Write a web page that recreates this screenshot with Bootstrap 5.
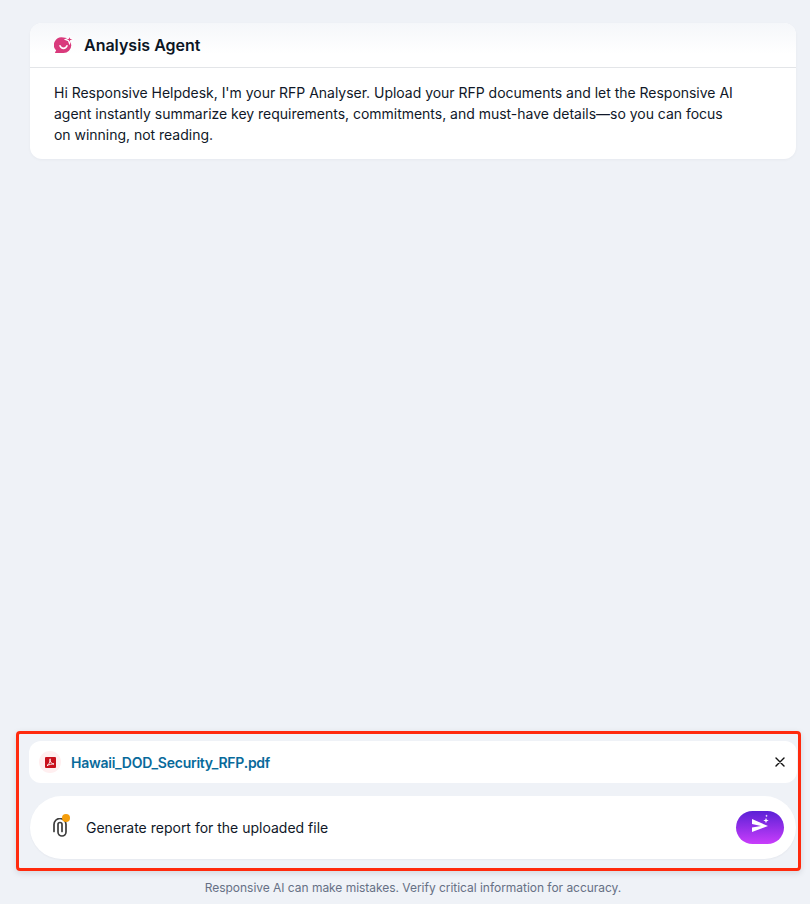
<!DOCTYPE html>
<html lang="en">
<head>
    <meta charset="UTF-8">
    <meta name="viewport" content="width=device-width, initial-scale=1.0">
    <title>Analysis Agent</title>
    <link href="https://cdn.jsdelivr.net/npm/bootstrap@5.3.3/dist/css/bootstrap.min.css" rel="stylesheet">
    <style>
        html, body { height: 100%; overflow: hidden; }
        body {
            background: #eff2f7;
            font-family: Inter, "Noto Sans", sans-serif;
            color: #101828;
            font-size: 14px;
        }
        .chat-page { height: 904px; padding: 23px 12px 0 16px; }
        .agent-box {
            margin: 0 2px 0 14px;
            background: #fff;
            border-radius: 12px;
            box-shadow: 0 1px 3px rgba(16, 24, 40, .04);
        }
        .agent-head {
            height: 45px;
            padding: 0 24px;
            gap: 10px;
            border-bottom: 1px solid #e3e5e8;
            border-radius: 12px 12px 0 0;
            background: linear-gradient(180deg, #f5f7fa 0%, #fff 70%);
        }
        .agent-title { font-size: 16px; font-weight: 600; color: #0b1524; }
        .agent-text {
            margin: 0;
            padding: 14px 60px 14px 24px;
            font-size: 14px;
            line-height: 21px;
            letter-spacing: -.02px;
            color: #101828;
        }
        .upload-frame {
            margin-top: auto;
            height: 140px;
            margin-right: -3px;
            border: 3px solid #ff2a0d;
            border-radius: 4px;
            padding: 7px 1px 0 10px;
            box-shadow: 0 2px 6px rgba(16, 24, 40, .12);
        }
        .file-row {
            height: 42px;
            background: #fff;
            border-radius: 12px;
            padding: 0 12px 0 10px;
            gap: 10px;
        }
        .pdf-badge {
            width: 22px; height: 22px;
            border-radius: 50%;
            background: #ffeff0;
        }
        .file-name { font-size: 14px; font-weight: 600; letter-spacing: -.25px; color: #086a9b; }
        .close-btn { border: 0; background: none; padding: 0; line-height: 0; }
        .prompt-row {
            height: 63px;
            margin: 13px 1px 0 1px;
            background: #fff;
            border-radius: 32px;
            padding: 0 12px 0 20px;
            box-shadow: 0 1px 2px rgba(16, 24, 40, .04);
        }
        .clip-wrap { position: relative; width: 20px; height: 24px; margin-right: 16px; padding: 2px 0 0 3px; }
        .clip-dot {
            position: absolute; top: -2px; right: 0;
            width: 8px; height: 8px;
            border-radius: 50%;
            background: #f59e0b;
        }
        .prompt-text { font-size: 14px; color: #101828; }
        .send-btn {
            width: 48px; height: 33px;
            border: 0;
            padding: 0;
            border-radius: 17px;
            background: linear-gradient(180deg, #5b21d6 0%, #c93dfb 100%);
        }
        .send-icon { margin-bottom: 5px; }
        .disclaimer {
            font-size: 12px;
            color: #667085;
            letter-spacing: -.03px;
            text-align: center;
            padding: 9px 0 9px 12px;
            line-height: 15px;
        }
    </style>
</head>
<body>
    <div class="chat-page d-flex flex-column">
        <div class="agent-box">
            <div class="agent-head d-flex align-items-center">
                <svg width="20" height="18" viewBox="0 0 20 18">
                    <path fill="#d93a7c" d="M9.500 1.500a7.800 7.800 0 0 1 0 15.600H1.800c-.7 0-1-.7-.6-1.200l1-1.300A7.800 7.800 0 0 1 9.500 1.500z"/>
                    <path fill="none" stroke="#fff" stroke-width="1.600" stroke-linecap="round" d="M6 9.800c1.200 3.400 5.800 3.400 7 0"/>
                    <path fill="#d93a7c" stroke="#fff" stroke-width="1.200" d="M15.500-.5l1.100 2.900 2.900 1.100-2.900 1.100-1.100 2.900-1.100-2.900-2.900-1.100 2.900-1.100z"/>
                </svg>
                <span class="agent-title">Analysis Agent</span>
            </div>
            <p class="agent-text">Hi Responsive Helpdesk, I'm your RFP Analyser. Upload your RFP documents and let the Responsive AI agent instantly summarize key requirements, commitments, and must-have details—so you can focus on winning, not reading.</p>
        </div>

        <div class="upload-frame">
            <div class="file-row d-flex align-items-center">
                <span class="pdf-badge d-flex align-items-center justify-content-center">
                    <svg width="11" height="11" viewBox="0 0 11 11">
                        <rect width="11" height="11" rx="1" fill="#c8101c"/>
                        <path fill="none" stroke="#fff" stroke-width=".9" d="M2 8.600c1.400-.8 2.600-2.600 3.200-5.400.2-1 .1-1.400-.1-1.400-.3 0-.4.8 0 2 .6 1.800 1.700 3 3.900 3.200-1.900-.1-4.800.4-7 1.600z"/>
                    </svg>
                </span>
                <span class="file-name flex-grow-1">Hawaii_DOD_Security_RFP.pdf</span>
                <button class="close-btn" type="button" aria-label="Remove">
                    <svg width="10" height="10" viewBox="0 0 10 10"><path stroke="#111" stroke-width="1.400" stroke-linecap="round" d="M1 1l8 8M9 1l-8 8"/></svg>
                </button>
            </div>
            <div class="prompt-row d-flex align-items-center">
                <span class="clip-wrap">
                    <svg width="14" height="19" viewBox="0 0 14 19" class="d-block">
                        <path fill="none" stroke="#3d3d3d" stroke-width="1.700" stroke-linecap="round" d="M1 13.500V6.500a6 6 0 0 1 12 0V14a3.700 3.700 0 0 1-8 0V6.500a2 2 0 0 1 4 0V13.500"/>
                    </svg>
                    <span class="clip-dot"></span>
                </span>
                <span class="prompt-text flex-grow-1">Generate report for the uploaded file</span>
                <button class="send-btn d-flex align-items-center justify-content-center" type="button" aria-label="Send">
                    <svg class="send-icon" width="20" height="22" viewBox="0 0 20 22">
                        <path fill="#fff" d="M2 5l16 7-16 6v-4.600l9-1.400-9-2z"/>
                        <path fill="#fff" d="M16 3.800l.7 2 2 .7-2 .7-.7 2-.7-2-2-.7 2-.7zM16.500.5l.4 1 1 .4-1 .4-.4 1-.4-1-1-.4 1-.4z"/>
                    </svg>
                </button>
            </div>
        </div>
        <div class="disclaimer">Responsive AI can make mistakes. Verify critical information for accuracy.</div>
    </div>
    <script src="https://cdn.jsdelivr.net/npm/bootstrap@5.3.3/dist/js/bootstrap.bundle.min.js"></script>
</body>
</html>
